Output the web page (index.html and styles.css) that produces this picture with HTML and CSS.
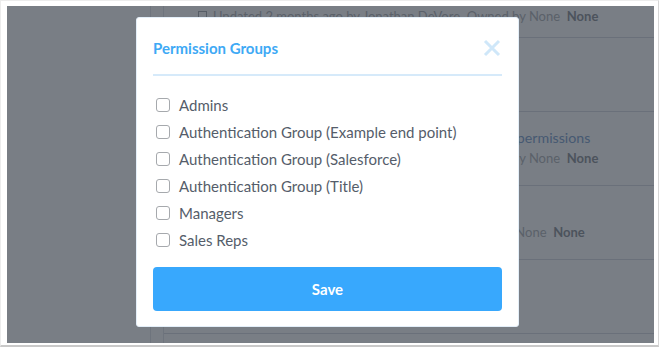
FILE: index.html
```html
<!DOCTYPE html>
<html lang="en">
<head>
    <meta charset="UTF-8">
    <meta name="viewport" content="width=device-width, initial-scale=1.0">
    <title>Permission Groups</title>
    <link rel="stylesheet" href="styles.css">
</head>
<body>
    <div class="frame">
        <div class="shot">
            <!-- page behind the modal -->
            <div class="page">
                <div class="sidebar"></div>
                <div class="gutter"></div>
                <div class="list">
                    <div class="item item-first">
                        <div class="meta"><span class="doc-icon"></span>Updated 2 months ago by Jonathan DeVore&nbsp; Owned by None&nbsp; <b>None</b></div>
                    </div>
                    <div class="item">
                        <a class="item-title">Sales Reps</a>
                    </div>
                    <div class="item">
                        <a class="item-title">Sales team members, managers and account admin permissions</a>
                        <div class="meta"><span class="doc-icon"></span>Updated 3 months ago by Jonathan DeVore&nbsp; Owned by None&nbsp; <b>None</b></div>
                    </div>
                    <div class="item">
                        <a class="item-title">Admins</a>
                        <div class="meta"><span class="doc-icon"></span>Updated 2 months ago by Jon M. DeVore&nbsp; Owned by None&nbsp; <b>None</b></div>
                    </div>
                    <div class="item"></div>
                </div>
            </div>
            <div class="backdrop"></div>

            <div class="modal">
                <div class="modal-header">
                    <h2>Permission Groups</h2>
                    <button class="close" type="button">
                        <svg width="18" height="18" viewBox="0 0 18 18"><path d="M2 2 L16 16 M16 2 L2 16" stroke="#cfe7f9" stroke-width="3" fill="none"/></svg>
                    </button>
                </div>
                <form class="groups">
                    <label><input type="checkbox" name="group" value="admins"> Admins</label>
                    <label><input type="checkbox" name="group" value="auth-example"> Authentication Group (Example end point)</label>
                    <label><input type="checkbox" name="group" value="auth-salesforce"> Authentication Group (Salesforce)</label>
                    <label><input type="checkbox" name="group" value="auth-title"> Authentication Group (Title)</label>
                    <label><input type="checkbox" name="group" value="managers"> Managers</label>
                    <label><input type="checkbox" name="group" value="sales-reps"> Sales Reps</label>
                    <button class="save" type="button">Save</button>
                </form>
            </div>
        </div>
    </div>
</body>
</html>
```

FILE: styles.css
```css
body {
    margin: 0;
    background-color: #ffffff;
    font-family: Lato, "Open Sans", sans-serif;
}
.frame {
    width: 659px;
    height: 347px;
    padding: 5px 0 0 6px;
    box-sizing: border-box;
    border-right: 1px solid #d6d6d6;
    border-bottom: 2px solid #c9c9c9;
    border-left: 1px solid #ececec;
    border-top: 1px solid #ececec;
    background-color: #ffffff;
}
.shot {
    position: relative;
    width: 647px;
    height: 337px;
    overflow: hidden;
}

/* background page */
.page {
    display: flex;
    height: 100%;
    background-color: #ffffff;
}
.sidebar {
    width: 143px;
    border-right: 1px solid #e4e6ea;
}
.gutter {
    width: 12px;
    border-right: 1px solid #e4e6ea;
}
.list {
    flex: 1;
}
.item {
    height: 74px;
    border-bottom: 1px solid #d9dde3;
    padding: 16px 0 0 34px;
    box-sizing: border-box;
}
.item-first {
    height: 32px;
    padding-top: 0;
}
.item-title {
    display: block;
    color: #7fa3cf;
    font-size: 14.2px;
    line-height: 20px;
    white-space: nowrap;
}
.meta {
    color: #b3b6ba;
    font-size: 13px;
    line-height: 20px;
    white-space: nowrap;
}
.meta b {
    color: #8f949a;
    font-weight: 700;
}
.doc-icon {
    display: inline-block;
    width: 7px;
    height: 9px;
    border: 1px solid #a9adb2;
    margin-right: 6px;
    vertical-align: -1px;
}
.backdrop {
    position: absolute;
    inset: 0;
    background-color: rgba(32, 40, 52, 0.6);
}

/* modal */
.modal {
    position: absolute;
    left: 129px;
    top: 11px;
    width: 383px;
    height: 310px;
    box-sizing: border-box;
    padding: 20px 16px 16px;
    background-color: #ffffff;
    border: 1px solid #e3eef8;
    border-radius: 3px;
}
.modal-header {
    display: flex;
    justify-content: space-between;
    align-items: center;
    padding-bottom: 16px;
    border-bottom: 2px solid #d6eafa;
}
.modal-header h2 {
    margin: 0;
    font-size: 15px;
    line-height: 20px;
    font-weight: 700;
    color: #3ea9f5;
}
.close {
    background: none;
    border: none;
    padding: 0;
    margin-right: 1px;
    width: 18px;
    height: 18px;
    cursor: pointer;
}
.close svg {
    display: block;
}
.groups {
    display: flex;
    flex-direction: column;
    padding-top: 15px;
}
.groups label {
    display: flex;
    align-items: center;
    gap: 9px;
    height: 27px;
    padding-left: 3px;
    font-size: 15px;
    color: #555d6a;
}
.groups input {
    appearance: none;
    margin: 0;
    width: 14px;
    height: 14px;
    border: 1px solid #a6a9ad;
    border-radius: 3px;
    background-color: #ffffff;
}
.save {
    margin-top: 14px;
    height: 44px;
    border: none;
    border-radius: 4px;
    background-color: #38a8fd;
    color: #ffffff;
    font-family: Lato, "Open Sans", sans-serif;
    font-size: 15px;
    font-weight: 700;
    cursor: pointer;
}
```
